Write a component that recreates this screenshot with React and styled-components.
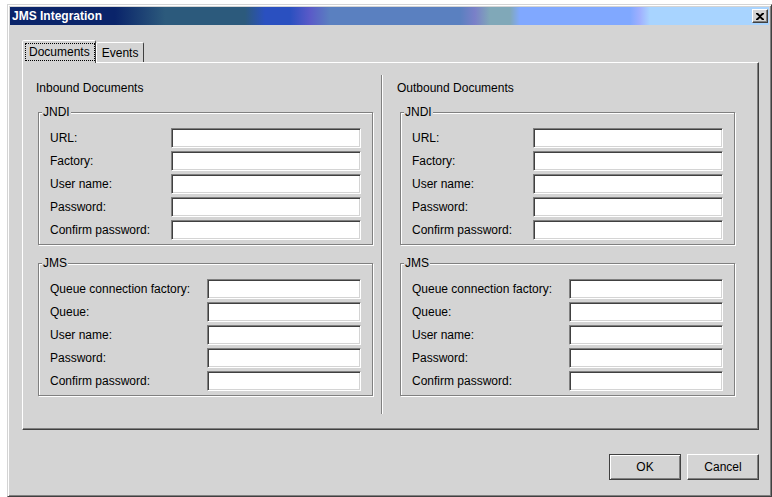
import React from 'react'
import styled, {createGlobalStyle} from 'styled-components'

const GlobalStyle = createGlobalStyle`
    body {
        margin: 0;
        background: #fff;
        font-family: "Liberation Sans", Arial, sans-serif;
        font-size: 12px;
        color: #000;
    }
`

const bg = '#d4d4d4'

const Page = styled.div `
    padding: 4px 0 0 7px;
`
const Window = styled.div `
    width: 765px;
    height: 493px;
    box-sizing: border-box;
    display: flex;
    flex-direction: column;
    background: ${bg};
    border: 1px solid;
    border-color: ${bg} #404040 #404040 ${bg};
    box-shadow: inset 1px 1px 0 #fff, inset -1px -1px 0 #808080;
    padding: 2px;
`
const TitleBar = styled.div `
    height: 18px;
    display: flex;
    align-items: center;
    justify-content: space-between;
    padding: 0 1px 0 2px;
    background: linear-gradient(to right,
        #0a246a 0px, #0a246a 105px,
        #2c5a7c 155px, #2c5a7c 235px,
        #2a50c0 255px, #2a50c0 280px,
        #5a5ac8 300px,
        #5a80c0 320px, #5a80c0 450px,
        #7a80c8 465px,
        #80a8b8 480px, #80a8b8 500px,
        #80a8ff 510px, #80a8ff 620px,
        #a0b0ff 630px,
        #a8d4ff 640px, #a8d4ff 100%);
`
const Title = styled.span `
    color: #fff;
    font-weight: 700;
    font-size: 12px;
`
const CloseButton = styled.div `
    width: 16px;
    height: 14px;
    box-sizing: border-box;
    background: ${bg};
    border: 1px solid;
    border-color: #fff #404040 #404040 #fff;
    box-shadow: inset -1px -1px 0 #808080;
    display: flex;
    align-items: center;
    justify-content: center;
`
const Body = styled.div `
    flex: 1;
    display: flex;
    flex-direction: column;
    padding: 15px 10px 0 12px;
`
const TabStrip = styled.div `
    display: flex;
    align-items: flex-end;
    height: 22px;
`
const Tab = styled.div `
    position: relative;
    z-index: ${props => props.$active ? 1 : 0};
    box-sizing: border-box;
    height: ${props => props.$active ? 23 : 20}px;
    margin-bottom: ${props => props.$active ? -1 : 0}px;
    padding: ${props => props.$active ? '2px 0 0 2px' : '2px 5px 0 5px'};
    background: ${bg};
    border: 1px solid;
    border-bottom: 0 none;
    border-color: #fff #404040 transparent #fff;
    border-radius: 2px 2px 0 0;
    line-height: 16px;
`
const TabFocus = styled.span `
    display: inline-block;
    padding: 0 4px 0 3px;
    line-height: 16px;
    border: 1px dotted #000;
`
const Panel = styled.div `
    height: 368px;
    box-sizing: border-box;
    border: 1px solid;
    border-color: #fff #404040 #404040 #fff;
    box-shadow: inset -1px -1px 0 #808080;
    padding: 12px 0 15px 13px;
    display: flex;
`
const Separator = styled.div `
    flex: 0 0 auto;
    width: 0;
    margin: 0 14px 0 8px;
    border-left: 1px solid #808080;
    border-right: 1px solid #fff;
`
const Section = styled.div `
    flex: 0 0 ${props => props.$width}px;
    display: flex;
    flex-direction: column;
`
const SectionTitle = styled.div `
    line-height: 26px;
`
const Group = styled.fieldset `
    width: 335px;
    min-width: 0;
    box-sizing: border-box;
    margin: ${props => props.$first ? 4 : 11}px 0 0 ${props => props.$offset}px;
    padding: 8px 11px 4px 11px;
    border: 1px solid #808080;
    box-shadow: 1px 1px 0 #fff, inset 1px 1px 0 #fff;
`
const Legend = styled.legend `
    margin-left: -8px;
    padding: 0 1px;
    line-height: 15px;
    background: ${bg};
`
const Rows = styled.div `
    display: grid;
    row-gap: 3px;
`
const Row = styled.label `
    display: grid;
    grid-template-columns: ${props => props.$labelWidth}px minmax(0, 1fr);
    align-items: center;
    height: 20px;
`
const Field = styled.input `
    width: 100%;
    min-width: 0;
    height: 20px;
    box-sizing: border-box;
    margin: 0;
    padding: 0 3px;
    background: #fff;
    border: 1px solid;
    border-color: #808080 #fff #fff #808080;
    box-shadow: inset 1px 1px 0 #404040, inset -1px -1px 0 ${bg};
    outline: none;
    font: inherit;
`
const Footer = styled.div `
    display: flex;
    justify-content: flex-end;
    gap: 6px;
    margin-top: 24px;
`
const Button = styled.button `
    width: 72px;
    height: 26px;
    box-sizing: border-box;
    margin: 0;
    padding: 0;
    background: ${bg};
    border: 1px solid;
    border-color: ${props => props.$default ? '#404040' : '#fff #404040 #404040 #fff'};
    box-shadow: ${props => props.$default
        ? 'inset 1px 1px 0 #fff, inset -1px -1px 0 #808080'
        : 'inset -1px -1px 0 #808080'};
    font: inherit;
    color: #000;
`

const jndiFields = ['URL:', 'Factory:', 'User name:', 'Password:', 'Confirm password:']
const jmsFields = ['Queue connection factory:', 'Queue:', 'User name:', 'Password:', 'Confirm password:']

const FieldGroup = ({title, fields, labelWidth, first, offset}) => (
    <Group $first={first} $offset={offset}>
        <Legend>{title}</Legend>
        <Rows>
            {fields.map((label, index) => (
                <Row key={index} $labelWidth={labelWidth}>
                    <span>{label}</span>
                    <Field type={'text'}/>
                </Row>
            ))}
        </Rows>
    </Group>
)

const DocumentSection = ({title, offset, width}) => (
    <Section $width={width}>
        <SectionTitle>{title}</SectionTitle>
        <FieldGroup title={'JNDI'} fields={jndiFields} labelWidth={121} first offset={offset}/>
        <FieldGroup title={'JMS'} fields={jmsFields} labelWidth={157} offset={offset}/>
    </Section>
)

export default function App() {
    return (
        <Page>
            <GlobalStyle/>
            <Window>
                <TitleBar>
                    <Title>JMS Integration</Title>
                    <CloseButton>
                        <svg width="8" height="7" viewBox="0 0 8 7">
                            <path d="M0 0h2l2 2 2-2h2v1L5 3.5 8 6v1H6L4 5 2 7H0V6l3-2.5L0 1z" fill="#000"/>
                        </svg>
                    </CloseButton>
                </TitleBar>
                <Body>
                    <TabStrip>
                        <Tab $active><TabFocus>Documents</TabFocus></Tab>
                        <Tab>Events</Tab>
                    </TabStrip>
                    <Panel>
                        <DocumentSection title={'Inbound Documents'} offset={2} width={337}/>
                        <Separator/>
                        <DocumentSection title={'Outbound Documents'} offset={3} width={339}/>
                    </Panel>
                    <Footer>
                        <Button $default>OK</Button>
                        <Button>Cancel</Button>
                    </Footer>
                </Body>
            </Window>
        </Page>
    )
}
